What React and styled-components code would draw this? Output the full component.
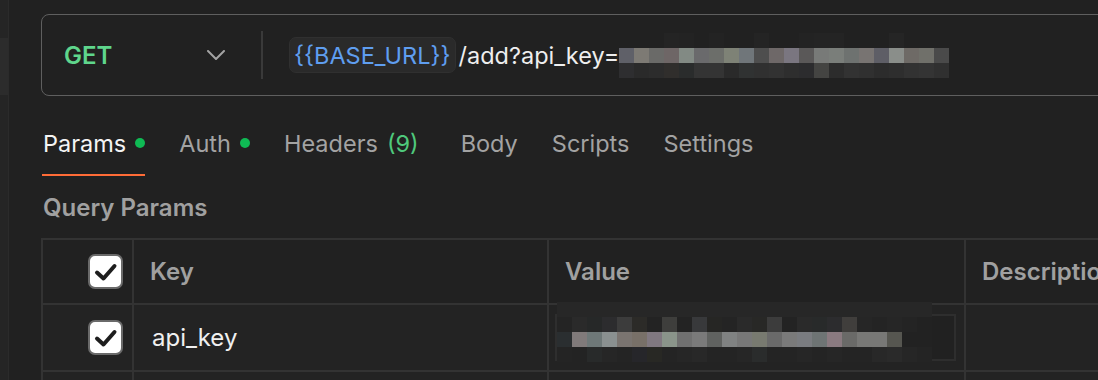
import React from 'react';
import styled, { createGlobalStyle } from 'styled-components';

const GlobalStyle = createGlobalStyle`
  html, body {
    margin: 0;
    padding: 0;
    background: #212121;
  }
  body {
    font-family: Inter, "Noto Sans", sans-serif;
    color: #ececec;
    -webkit-font-smoothing: antialiased;
  }
`;

const Page = styled.div`
  display: flex;
  height: 380px;
  overflow: hidden;
`;

const Sidebar = styled.div`
  width: 8px;
  flex: 0 0 8px;
  background: #252525;
  border-right: 1px solid #2b2b2b;
  padding-top: 38px;
`;

const SidebarBlock = styled.div`
  height: 57px;
  background: #2c2c2c;
`;

const Main = styled.div`
  flex: 1;
  min-width: 0;
  overflow: hidden;
  padding: 14px 0 0 32px;
`;

const UrlBar = styled.div`
  display: flex;
  align-items: center;
  width: 1200px;
  height: 80px;
  border: 1.5px solid #5f5f5f;
  border-radius: 8px;
`;

const MethodSelect = styled.div`
  display: flex;
  align-items: center;
  justify-content: space-between;
  width: 161px;
  padding-left: 22px;
`;

const Method = styled.span`
  font-size: 24px;
  font-weight: 600;
  color: #5fd68c;
`;

const Divider = styled.div`
  width: 2px;
  height: 48px;
  margin-left: 36px;
  background: #3a3a3a;
`;

const UrlText = styled.div`
  display: flex;
  align-items: center;
  margin-left: 26px;
  font-size: 23.5px;
`;

const VariablePill = styled.span`
  display: inline-flex;
  align-items: center;
  height: 34px;
  padding: 0 4px;
  background: #2a2a2a;
  border: 1px solid #303030;
  border-radius: 7px;
  color: #5f9ef0;
`;

const Path = styled.span`
  margin-left: 3px;
  color: #eeeeee;
`;

const Mosaic = styled.div`
  display: grid;
  grid-template-columns: repeat(${p => p.cols}, 15px);
  grid-auto-rows: 15px;
`;

const Tabs = styled.div`
  display: flex;
  gap: 34px;
  margin-top: 16px;
  padding-left: 2px;
`;

const Tab = styled.div`
  display: flex;
  align-items: center;
  gap: 9px;
  height: 62px;
  margin-left: ${p => (p.$active ? '-1px' : '0')};
  padding-left: ${p => (p.$active ? '1px' : '0')};
  margin-right: ${p => (p.$extra ? '8px' : '0')};
  border-bottom: 2px solid ${p => (p.$active ? '#ff6c37' : 'transparent')};
  font-size: 23.5px;
  color: ${p => (p.$active ? '#f4f4f4' : '#a3a3a3')};
`;

const Dot = styled.span`
  width: 10px;
  height: 10px;
  border-radius: 50%;
  background: #0fba54;
`;

const Count = styled.span`
  color: #4fc97c;
`;

const SectionTitle = styled.div`
  margin-top: 17px;
  padding-left: 2px;
  font-size: 24px;
  line-height: 30px;
  font-weight: 600;
  color: #a0a0a0;
`;

const Table = styled.div`
  display: grid;
  grid-template-columns: 91px 415px 417px 400px;
  margin-top: 15px;
  border-left: 2px solid #333333;
  border-top: 2px solid #333333;
`;

const Cell = styled.div`
  position: relative;
  display: flex;
  align-items: center;
  justify-content: ${p => (p.$check ? 'flex-end' : 'flex-start')};
  height: ${p => (p.$head ? '63px' : '65px')};
  padding: ${p => (p.$check ? '0 9px 0 0' : p.$head ? '0 0 0 16px' : '0 0 0 18px')};
  background: ${p => (p.$head ? '#212121' : '#232323')};
  border-right: 2px solid #333333;
  border-bottom: 2px solid #333333;
  font-size: 24px;
  font-weight: ${p => (p.$head ? 600 : 400)};
  color: ${p => (p.$head ? '#a0a0a0' : '#f0f0f0')};
  white-space: nowrap;
`;

const CheckBox = styled.div`
  display: flex;
  align-items: center;
  justify-content: center;
  width: 31px;
  height: 31px;
  background: #ffffff;
  border: 2px solid #6a6a6a;
  border-radius: 7px;
`;

const ValueInput = styled.div`
  position: absolute;
  left: 6px;
  right: 8px;
  top: 9px;
  bottom: 9px;
  border: 2px solid #2e2e2e;
  background: #212121;
`;

const ValueMosaic = styled(Mosaic)`
  position: absolute;
  left: 8px;
  top: -3px;
`;

const urlMosaic = [
  ['#212121', '#212121', '#212121', '#242424', '#232323', '#212121', '#232323', '#212121', '#212121', '#242424', '#212121', '#212121', '#232323', '#242424', '#242424', '#212121', '#212121', '#212121', '#252525', '#212121', '#212121', '#212121'],
  ['#5f6068', '#7d7a74', '#6a6a68', '#6e6666', '#828a84', '#6a6a6c', '#6c6e6a', '#7e8276', '#70767a', '#4e4e4e', '#6e6868', '#7a7680', '#5a5858', '#787a78', '#7a7e7a', '#6e7270', '#787472', '#5e5e66', '#8a8e8a', '#6e6a66', '#70706a', '#4a4a4a'],
  ['#2e2e30', '#2a2a2a', '#2c2c2c', '#302e2c', '#2a2c2c', '#343434', '#343434', '#2a2a2a', '#303232', '#303030', '#323232', '#2e2e2e', '#2c2c2e', '#444442', '#2c2c2c', '#323232', '#303030', '#2c2c2c', '#2e2e2e', '#323232', '#343434', '#303030'],
];

const valueMosaic = [
  Array(25).fill('#272727'),
  ['#242424', '#2a2a2a', '#262828', '#2c2c2e', '#3c3c3c', '#2c2b28', '#232323', '#3e3e3c', '#232323', '#38393b', '#262624', '#242424', '#2a2a2a', '#282826', '#3c3c3c', '#232323', '#2a2a2a', '#282a2a', '#2c2c2e', '#403e3c', '#262626', '#242424', '#262626', '#242424', '#222222'],
  ['#2a2e30', '#807a7a', '#6e7878', '#8a9090', '#7a7470', '#787068', '#807880', '#8a948a', '#707070', '#7a7a7a', '#606260', '#808282', '#787878', '#787a70', '#6a6a6a', '#7a7a7a', '#7a7c80', '#6e7474', '#8a7a80', '#6a6a68', '#787876', '#787876', '#565650', '#222222', '#222222'],
  ['#242424', '#232323', '#282a2a', '#262626', '#242424', '#26262a', '#282824', '#242424', '#262626', '#282828', '#242424', '#242424', '#262626', '#2a2c2c', '#242424', '#242424', '#262626', '#242424', '#262626', '#242424', '#242424', '#282828', '#2a2a2a', '#262626', '#242424'],
];

const renderMosaic = rows =>
  rows.flatMap((row, r) =>
    row.map((color, c) => <div key={`${r}-${c}`} style={{ background: color }} />)
  );

const Chevron = () => (
  <svg width="18" height="10" viewBox="0 0 18 10" fill="none">
    <path d="M1 1l8 8 8-8" stroke="#a3a3a3" strokeWidth="2" strokeLinecap="round" strokeLinejoin="round" />
  </svg>
);

const Check = () => (
  <CheckBox>
    <svg width="25" height="20" viewBox="0 0 25 20" fill="none">
      <path d="M4 10.5l6.5 6L21.5 4" stroke="#1e1e1e" strokeWidth="4" strokeLinecap="round" strokeLinejoin="round" />
    </svg>
  </CheckBox>
);

const tabs = [
  { label: 'Params', dot: true, active: true },
  { label: 'Auth', dot: true },
  { label: 'Headers', count: 9 },
  { label: 'Body' },
  { label: 'Scripts' },
  { label: 'Settings' },
];

const App = () => {
  return (
    <>
      <GlobalStyle />
      <Page>
        <Sidebar>
          <SidebarBlock />
        </Sidebar>
        <Main>
          <UrlBar>
            <MethodSelect>
              <Method>GET</Method>
              <Chevron />
            </MethodSelect>
            <Divider />
            <UrlText>
              <VariablePill>{'{{BASE_URL}}'}</VariablePill>
              <Path>/add?api_key=</Path>
              <Mosaic cols={22}>{renderMosaic(urlMosaic)}</Mosaic>
            </UrlText>
          </UrlBar>

          <Tabs>
            {tabs.map(tab => (
              <Tab key={tab.label} $active={tab.active} $extra={tab.count}>
                {tab.label}
                {tab.dot && <Dot />}
                {tab.count && <Count>({tab.count})</Count>}
              </Tab>
            ))}
          </Tabs>

          <SectionTitle>Query Params</SectionTitle>

          <Table>
            <Cell $head $check><Check /></Cell>
            <Cell $head>Key</Cell>
            <Cell $head>Value</Cell>
            <Cell $head>Description</Cell>

            <Cell $check><Check /></Cell>
            <Cell>api_key</Cell>
            <Cell>
              <ValueInput />
              <ValueMosaic cols={25}>{renderMosaic(valueMosaic)}</ValueMosaic>
            </Cell>
            <Cell />

            <Cell $check />
            <Cell />
            <Cell />
            <Cell />
          </Table>
        </Main>
      </Page>
    </>
  );
};

export default App;
